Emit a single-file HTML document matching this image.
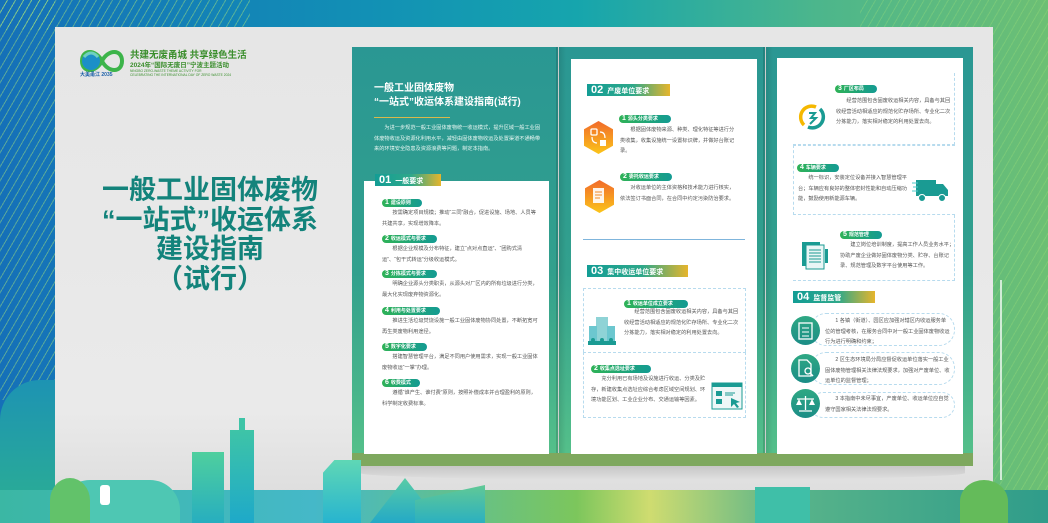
<!DOCTYPE html>
<html><head><meta charset="utf-8">
<style>
*{margin:0;padding:0;box-sizing:border-box}
body{width:1048px;height:523px;overflow:hidden;position:relative;font-family:"Liberation Sans","Noto Sans CJK SC",sans-serif;
background:linear-gradient(90deg,#1570b8 0%,#1290b5 35%,#16a5ad 55%,#4cb68c 78%,#6cbf74 100%);}
.a{position:absolute}
.stripes{background:repeating-linear-gradient(120deg,transparent 0 6px,rgba(170,230,120,.45) 6px 7px)}
.board{left:55px;top:27px;width:938px;height:480px;background:linear-gradient(180deg,#e6e6e6 0%,#eaeaea 80%,#dcdcdc 100%);}
.panel{top:47px;height:410px;background:linear-gradient(180deg,#2a9793 0%,#32a08d 55%,#55c08a 100%);}
.card{background:#fff}
.hd{height:12px;background:linear-gradient(90deg,#139d95 0%,#2ea88a 55%,#e6b52c 100%);color:#fff;font-weight:bold;font-size:7px;line-height:12px;padding-left:4px;white-space:nowrap}
.hd b{font-size:11px;margin-right:4px}
.pill{height:8px;border-radius:5px;background:linear-gradient(90deg,#2fb257,#149b93);color:#fff;font-size:5px;line-height:8px;padding-left:3px;white-space:nowrap;font-weight:bold}
.pill i{font-style:normal;color:#fff;font-size:7px;margin-right:2px}
.p{font-size:5.2px;line-height:10.5px;color:#555;text-indent:2em}
.pw{font-size:5.2px;line-height:10.5px;color:#e8f6f2;text-indent:2em}
.dot{border:1px dashed #b7dbee}
.circ{width:29px;height:29px;border-radius:50%;background:linear-gradient(180deg,#2fa884,#1b8d86)}
.hex{width:29px;height:33px;clip-path:polygon(50% 0,100% 25%,100% 75%,50% 100%,0 75%,0 25%);background:linear-gradient(180deg,#f16a2b,#fbc51a)}
</style></head><body>
<div class="a stripes" style="left:0;top:0;width:250px;height:30px"></div>
<div class="a stripes" style="left:860px;top:0;width:188px;height:523px;opacity:.6"></div>
<div class="a stripes" style="left:0;top:0;width:55px;height:400px"></div>
<div class="a" style="left:0;top:380px;width:70px;height:143px;background:linear-gradient(180deg,#1d93b3,#2cb091);border-radius:40px 0 0 0"></div>
<div class="a board"></div>

<!-- logo -->
<svg class="a" style="left:78px;top:43px" width="48" height="36" viewBox="0 0 48 36">
<path d="M4 18 C4 6 18 6 24 18 C30 30 44 30 44 18 C44 6 30 6 24 18 C18 30 4 30 4 18Z" fill="none" stroke="#3cb44a" stroke-width="4"/>
<circle cx="13" cy="18" r="9" fill="#1b8fc8"/><path d="M6 14 q7 -8 14 0" stroke="#6fd0c0" stroke-width="3" fill="none"/>
</svg>
<div class="a" style="left:80px;top:71px;font-size:5px;color:#1b5fa8;font-weight:bold">大美甬江 2035</div>
<div class="a" style="left:130px;top:47px;font-size:9.5px;font-weight:bold;color:#3a8e2c;white-space:nowrap">共建无废甬城 共享绿色生活</div>
<div class="a" style="left:130px;top:59px;font-size:6.5px;font-weight:bold;color:#3a8e2c;white-space:nowrap">2024年“国际无废日”宁波主题活动</div>
<div class="a" style="left:130px;top:69px;font-size:3.3px;color:#3a8e2c;line-height:4.3px;white-space:nowrap">NINGBO ZERO-WASTE THEME ACTIVITY FOR<br>CELEBRATING THE INTERNATIONAL DAY OF ZERO WASTE 2024</div>

<!-- big title -->
<div class="a" style="left:80px;top:176px;width:260px;text-align:center;font-size:27px;line-height:29.5px;font-weight:bold;color:#13837b">一般工业固体废物<br>“一站式”收运体系<br>建设指南<br>（试行）</div>

<!-- panels -->
<div class="a panel" style="left:352px;width:206px"></div>
<div class="a panel" style="left:559px;width:206px"></div>
<div class="a panel" style="left:766px;width:207px"></div>
<div class="a" style="left:556px;top:47px;width:10px;height:418px;background:linear-gradient(90deg,rgba(0,0,0,.15),rgba(0,0,0,0))"></div>
<div class="a" style="left:763px;top:47px;width:10px;height:418px;background:linear-gradient(90deg,rgba(0,0,0,.15),rgba(0,0,0,0))"></div>
<div class="a" style="left:352px;top:453px;width:621px;height:13px;background:#7ea85e"></div>
<div class="a" style="left:360px;top:466px;width:605px;height:14px;background:linear-gradient(180deg,rgba(0,0,0,.12),rgba(0,0,0,0));border-radius:0 0 50% 50%"></div>

<!-- panel 1 -->
<div class="a" style="left:374px;top:82px;color:#fff;font-weight:bold;font-size:10px;line-height:14px;white-space:nowrap">一般工业固体废物<br>“一站式”收运体系建设指南(试行)</div>
<div class="a" style="left:374px;top:117px;width:76px;height:1px;background:#d9b94a"></div>
<div class="a pw" style="left:374px;top:123px;width:168px">为进一步规范一般工业固体废物统一收运模式，提升区域一般工业固体废物收运及资源化利用水平，减轻由固体废物收运及处置渠道不通畅带来的环境安全隐患及资源浪费等问题，制定本指南。</div>
<div class="a card" style="left:364px;top:181px;width:185px;height:273px"></div>
<div class="a hd" style="left:375px;top:174px;width:66px"><b>01</b>一般要求</div>
<div class="a pill" style="left:382px;top:199px;width:40px"><i>1</i>建设原则</div>
<div class="a p" style="left:382px;top:208px;width:158px">按需确定项目规模；推动“三同”融合，促进设施、场地、人员等共建共享，实现增效降本。</div>
<div class="a pill" style="left:382px;top:235px;width:55px"><i>2</i>收运模式与要求</div>
<div class="a p" style="left:382px;top:244px;width:158px">根据企业规模及分布特征，建立“点对点直运”、“团购式清运”、“包干式转运”分级收运模式。</div>
<div class="a pill" style="left:382px;top:270px;width:55px"><i>3</i>分拣模式与要求</div>
<div class="a p" style="left:382px;top:279px;width:158px">明确企业源头分类职责，从源头对厂区内的所有垃圾进行分类，最大化实现废弃物资源化。</div>
<div class="a pill" style="left:382px;top:307px;width:58px"><i>4</i>利用与处置要求</div>
<div class="a p" style="left:382px;top:316px;width:158px">推进生活垃圾焚烧设施一般工业固体废物协同处置，不断拓宽可再生类废物利用途径。</div>
<div class="a pill" style="left:382px;top:343px;width:45px"><i>5</i>数字化要求</div>
<div class="a p" style="left:382px;top:352px;width:158px">搭建智慧管理平台，满足不同用户使用需求，实现一般工业固体废物收运“一掌”办理。</div>
<div class="a pill" style="left:382px;top:379px;width:38px"><i>6</i>收费模式</div>
<div class="a p" style="left:382px;top:388px;width:158px">遵循“谁产生、谁付费”原则，按照补偿成本并合理盈利的原则，科学制定收费标准。</div>

<!-- panel 2 -->
<div class="a card" style="left:571px;top:59px;width:186px;height:395px"></div>
<div class="a hd" style="left:587px;top:84px;width:83px"><b>02</b>产废单位要求</div>
<div class="a pill" style="left:619px;top:115px;width:52px"><i>1</i>源头分类要求</div>
<div class="a hex" style="left:584px;top:121px"></div>
<svg class="a" style="left:590px;top:128px" width="17" height="19" viewBox="0 0 17 19"><rect x="1" y="1" width="6" height="6" rx="1" fill="none" stroke="#fff" stroke-width="1.3"/><rect x="10" y="12" width="6" height="6" fill="#fff"/><path d="M10 4 q5 0 5 6 M7 15 q-5 0 -5-6" stroke="#fff" fill="none" stroke-width="1.2"/></svg>
<div class="a p" style="left:620px;top:125px;width:118px">根据固体废物来源、种类、理化特征等进行分类收集，收集设施统一设置标识牌，并做好台账记录。</div>
<div class="a pill" style="left:620px;top:173px;width:52px"><i>2</i>委托收运要求</div>
<div class="a hex" style="left:585px;top:180px"></div>
<svg class="a" style="left:592px;top:187px" width="15" height="18" viewBox="0 0 15 18"><rect x="1" y="1" width="11" height="15" fill="#fff" opacity=".9"/><path d="M3 5h7M3 8h7M3 11h5" stroke="#f08a2a"/></svg>
<div class="a p" style="left:620px;top:183px;width:118px">对收运单位的主体资格和技术能力进行核实，依法签订书面合同，在合同中约定污染防治要求。</div>
<div class="a" style="left:583px;top:239px;width:162px;height:1px;background:#7fb5dc"></div>
<div class="a hd" style="left:587px;top:265px;width:101px"><b>03</b>集中收运单位要求</div>
<div class="a dot" style="left:583px;top:288px;width:163px;height:64px;border-bottom:none"></div>
<div class="a dot" style="left:583px;top:352px;width:163px;height:66px"></div>
<div class="a pill" style="left:624px;top:300px;width:64px"><i>1</i>收运单位成立要求</div>
<svg class="a" style="left:588px;top:316px" width="28" height="29" viewBox="0 0 28 29"><rect x="8" y="1" width="12" height="25" fill="#8fd3d6"/><rect x="1" y="10" width="8" height="16" fill="#6cc7cf"/><rect x="19" y="10" width="8" height="16" fill="#6cc7cf"/><rect x="0" y="25" width="28" height="4" fill="#1a9b93"/><circle cx="5" cy="24" r="2" fill="#1a9b93"/><circle cx="14" cy="24" r="2" fill="#1a9b93"/><circle cx="23" cy="24" r="2" fill="#1a9b93"/></svg>
<div class="a p" style="left:624px;top:307px;width:118px">经营范围包含固废收运相关内容，具备与其回收经营活动相适应的规范化贮存场所、专业化二次分拣能力，落实相对稳定的利用处置去向。</div>
<div class="a pill" style="left:591px;top:365px;width:60px"><i>2</i>收集点选址要求</div>
<div class="a p" style="left:591px;top:374px;width:115px">充分利用已有场地及设施进行收运、分类及贮存，新建收集点选址应综合考虑区域空间规划、环境功能区划、工业企业分布、交通运输等因素。</div>
<svg class="a" style="left:711px;top:382px" width="32" height="28" viewBox="0 0 32 28"><rect x="1" y="1" width="30" height="26" fill="#eef7f7" stroke="#1a9b93"/><rect x="1" y="1" width="30" height="4" fill="#1a9b93"/><rect x="5" y="9" width="6" height="5" fill="#1a9b93"/><rect x="5" y="17" width="6" height="5" fill="#1a9b93"/><path d="M14 11h10M14 13h8" stroke="#1a9b93"/><path d="M20 16l9 4-4 1 3 4-2 1-3-4-3 3z" fill="#1a9b93"/></svg>

<!-- panel 3 -->
<div class="a card" style="left:777px;top:58px;width:186px;height:396px"></div>
<div class="a dot" style="left:793px;top:73px;width:162px;height:72px;border-top:none;border-left:none"></div>
<div class="a dot" style="left:793px;top:145px;width:162px;height:70px;border-right:none"></div>
<div class="a dot" style="left:793px;top:215px;width:162px;height:66px;border-left:none;border-top:none"></div>
<div class="a pill" style="left:835px;top:85px;width:42px"><i>3</i>厂区布局</div>
<svg class="a" style="left:796px;top:101px" width="32" height="32" viewBox="0 0 32 32"><path d="M8 24 A11 11 0 0 1 20 6" stroke="#f5b800" stroke-width="3.5" fill="none"/><path d="M24 8 A11 11 0 0 1 12 26" stroke="#1a9b93" stroke-width="3.5" fill="none"/><path d="M13 12h6l-4 5h5l-6 6" stroke="#1a9b93" stroke-width="2" fill="none"/></svg>
<div class="a p" style="left:836px;top:96px;width:118px">经营范围包含固废收运相关内容，具备与其回收经营活动相适应的规范化贮存场所、专业化二次分拣能力，落实相对稳定的利用处置去向。</div>
<div class="a pill" style="left:797px;top:164px;width:42px"><i>4</i>车辆要求</div>
<div class="a p" style="left:798px;top:173px;width:110px">统一标识，安装定位设备并接入智慧管理平台；车辆应有良好的整体密封性能和自动压缩功能，鼓励使用新能源车辆。</div>
<svg class="a" style="left:912px;top:178px" width="38" height="25" viewBox="0 0 38 25"><rect x="4" y="2" width="20" height="16" fill="#1a9b93"/><path d="M24 6h7l5 6v6H24z" fill="#1a9b93"/><circle cx="10" cy="20" r="3.5" fill="#1a9b93" stroke="#fff"/><circle cx="30" cy="20" r="3.5" fill="#1a9b93" stroke="#fff"/><path d="M0 5h6M1 9h5M0 13h6" stroke="#4dc8c8"/></svg>
<div class="a pill" style="left:840px;top:231px;width:42px"><i>5</i>规范管理</div>
<svg class="a" style="left:800px;top:240px" width="30" height="30" viewBox="0 0 30 30"><rect x="2" y="2" width="18" height="24" fill="#1a9b93"/><rect x="6" y="5" width="18" height="24" fill="#e9f6f6" stroke="#1a9b93"/><path d="M9 10h12M9 13h12M9 16h12M9 19h12M9 22h12" stroke="#1a9b93"/><rect x="25" y="9" width="3" height="14" fill="#1a9b93"/></svg>
<div class="a p" style="left:840px;top:240px;width:115px">建立岗位培训制度，提高工作人员业务水平；协助产废企业做好固体废物分类、贮存、台账记录、规范管理及数字平台使用等工作。</div>
<div class="a hd" style="left:793px;top:291px;width:82px"><b>04</b>监督监管</div>
<div class="a dot" style="left:810px;top:313px;width:145px;height:33px;border-radius:16px"></div>
<div class="a dot" style="left:810px;top:352px;width:145px;height:33px;border-radius:16px"></div>
<div class="a dot" style="left:810px;top:392px;width:145px;height:26px;border-radius:13px"></div>
<div class="a circ" style="left:791px;top:316px"></div>
<div class="a circ" style="left:791px;top:354px"></div>
<div class="a circ" style="left:791px;top:389px"></div>
<svg class="a" style="left:797px;top:321px" width="17" height="19" viewBox="0 0 17 19"><rect x="2" y="2" width="13" height="16" fill="none" stroke="#fff" stroke-width="1.3"/><path d="M5 7h7M5 11h7M5 15h7" stroke="#fff"/></svg>
<svg class="a" style="left:797px;top:359px" width="18" height="19" viewBox="0 0 18 19"><path d="M2 1h8l4 4v12H2z" fill="none" stroke="#fff" stroke-width="1.3"/><circle cx="11" cy="12" r="3" fill="none" stroke="#fff" stroke-width="1.3"/><path d="M13 14l3 3" stroke="#fff" stroke-width="1.5"/></svg>
<svg class="a" style="left:795px;top:394px" width="21" height="19" viewBox="0 0 21 19"><path d="M10.5 2v14M4 17h13M2 5h17" stroke="#fff" stroke-width="1.3"/><path d="M1 11l3-6 3 6zM14 11l3-6 3 6z" fill="#fff"/></svg>
<div class="a p" style="left:825px;top:316px;width:125px">1 各镇（街道）、园区应加强对辖区内收运服务单位的管理考核，在服务合同中对一般工业固体废物收运行为进行明确和约束；</div>
<div class="a p" style="left:825px;top:355px;width:125px">2 区生态环境局分局应督促收运单位落实一般工业固体废物管理相关法律法规要求，加强对产废单位、收运单位的监督管理；</div>
<div class="a p" style="left:825px;top:394px;width:125px">3 本指南中未尽事宜，产废单位、收运单位应自觉遵守国家相关法律法规要求。</div>

<!-- bottom cityscape -->
<div class="a" style="left:0;top:490px;width:1048px;height:33px;background:linear-gradient(90deg,#3bb7a4,#45b8c8 30%,#7cc65c 55%,#cfdc70 62%,#59b48a 75%,#2f9c8a 100%)"></div>
<div class="a" style="left:192px;top:452px;width:32px;height:71px;background:linear-gradient(180deg,#4fcf9e,#27aebf)"></div>
<div class="a" style="left:230px;top:430px;width:24px;height:93px;background:linear-gradient(180deg,#3ec4a7,#1ea9c9)"></div>
<div class="a" style="left:239px;top:418px;width:6px;height:14px;background:#3ec4a7"></div>
<div class="a" style="left:323px;top:460px;width:38px;height:63px;background:linear-gradient(180deg,#5fd7b5,#27b4cf);clip-path:polygon(30% 0,100% 0,100% 100%,0 100%,0 20%)"></div>
<div class="a" style="left:370px;top:478px;width:70px;height:45px;background:linear-gradient(180deg,#58cca6,#24a9c6);clip-path:polygon(50% 0,100% 100%,0 100%)"></div>
<div class="a" style="left:415px;top:485px;width:70px;height:38px;background:linear-gradient(180deg,#61c996,#2bb0c0);clip-path:polygon(100% 0,100% 100%,0 100%,0 40%)"></div>
<div class="a" style="left:60px;top:480px;width:120px;height:43px;background:#4ec7b3;border-radius:30px 30px 0 0"></div>
<div class="a" style="left:50px;top:478px;width:40px;height:45px;background:#62c26a;border-radius:50% 50% 0 0"></div>
<div class="a" style="left:100px;top:485px;width:10px;height:20px;background:#fff;border-radius:3px"></div>
<div class="a" style="left:755px;top:487px;width:55px;height:36px;background:#3fbfa8"></div>
<div class="a" style="left:960px;top:480px;width:48px;height:43px;background:#64bb5a;border-radius:50% 50% 0 0"></div>
<div class="a" style="left:1000px;top:280px;width:2px;height:200px;background:rgba(255,255,255,.7)"></div>
</body></html>
